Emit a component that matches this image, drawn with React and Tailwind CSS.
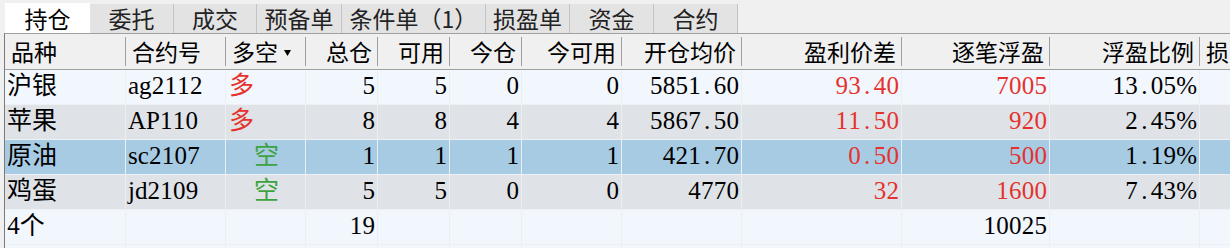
import React from "react";

const CJK = { fontFamily: '"Noto Sans CJK SC", "Noto Sans", sans-serif' };
const DATA = { fontFamily: '"Liberation Serif", "Noto Sans CJK SC", serif' };

const tabs = [
  { t: "持仓", w: "w-[85px]", active: true },
  { t: "委托", w: "w-[84px]" },
  { t: "成交", w: "w-[83px]" },
  { t: "预备单", w: "w-[85px]" },
  { t: "条件单（1）", w: "w-[144px]" },
  { t: "损盈单", w: "w-[84px]" },
  { t: "资金", w: "w-[84px]" },
  { t: "合约", w: "w-[84px]" },
];

const cols = [
  { h: "品种", w: "w-[121px]", left: true },
  { h: "合约号", w: "w-[100px]", left: true },
  { h: "多空", w: "w-[80px]", left: true, tri: true },
  { h: "总仓", w: "w-[72px]" },
  { h: "可用", w: "w-[72px]" },
  { h: "今仓", w: "w-[72px]" },
  { h: "今可用", w: "w-[100px]" },
  { h: "开仓均价", w: "w-[120px]" },
  { h: "盈利价差", w: "w-[160px]" },
  { h: "逐笔浮盈", w: "w-[148px]" },
  { h: "浮盈比例", w: "w-[150px]" },
  { h: "损", w: "w-[60px]", left: true, last: true },
];

const RED = "text-[#e5322d]";
const GREEN = "text-[#3ea33e]";

const rows = [
  { bg: "bg-[#f2f6fd]", c: ["沪银", "ag2112", "多", "5", "5", "0", "0", "5851.60", "93.40", "7005", "13.05%", ""] },
  { bg: "bg-[#dfe3e8]", c: ["苹果", "AP110", "多", "8", "8", "4", "4", "5867.50", "11.50", "920", "2.45%", ""] },
  { bg: "bg-[#a8cbe4]", c: ["原油", "sc2107", "空", "1", "1", "1", "1", "421.70", "0.50", "500", "1.19%", ""] },
  { bg: "bg-[#dfe3e8]", c: ["鸡蛋", "jd2109", "空", "5", "5", "0", "0", "4770", "32", "1600", "7.43%", ""] },
  { bg: "bg-[#f2f6fd]", total: true, c: ["4个", "", "", "19", "", "", "", "", "", "10025", "", ""] },
  { bg: "bg-[#f2f6fd]", c: ["", "", "", "", "", "", "", "", "", "", "", ""] },
];

function Mono({ text }) {
  return (
    <span className="inline-flex items-baseline">
      {Array.from(text).map((ch, i) =>
        "0123456789.".includes(ch) ? (
          <span key={i} className="inline-block w-[12.75px] text-center">
            {ch}
          </span>
        ) : (
          <span key={i}>{ch}</span>
        )
      )}
    </span>
  );
}

function Tri() {
  return (
    <svg width="7" height="6" viewBox="0 0 7 6" className="ml-[6px] mt-[2px]">
      <polygon points="0,0 7,0 3.5,6" fill="#000" />
    </svg>
  );
}

function cellClass(row, i) {
  if (row.total) return "text-black";
  if (i === 2) return row.c[2] === "多" ? RED + " pl-[3px]" : GREEN + " pl-[28px]";
  if (i === 8 || i === 9) return RED;
  return "text-black";
}

export default function App() {
  return (
    <div className="w-[1230px] h-[248px] bg-[#f0f0f0] overflow-hidden">
      {/* tab strip */}
      <div className="flex items-end h-[33px] pl-[5px] whitespace-nowrap" style={CJK}>
        {tabs.map((t) =>
          t.active ? (
            <div
              key={t.t}
              className={`${t.w} h-[30px] bg-white flex items-center justify-center text-[23px] text-black leading-none`}
            >
              {t.t}
            </div>
          ) : (
            <div
              key={t.t}
              className={`${t.w} h-[29px] bg-[#e3e3e3] border-r border-[#c4c4c4] flex items-center justify-center text-[23px] text-[#222] leading-none`}
            >
              {t.t}
            </div>
          )
        )}
      </div>

      {/* table */}
      <div className="ml-[4px] border-l border-l-[#7a7a7a] border-t border-t-[#a0a0a0] whitespace-nowrap">
        {/* header */}
        <div className="flex h-[36px] border-b border-[#a0a0a0] bg-[#f0f0f0]" style={CJK}>
          {cols.map((c) => (
            <div key={c.h} className={`${c.w} shrink-0 flex items-center`}>
              <div
                className={`flex-1 flex items-center text-[23px] leading-none text-black ${
                  c.left ? "justify-start pl-[6px]" : "justify-end pr-[5px]"
                }`}
              >
                {c.h}
                {c.tri && <Tri />}
              </div>
              {!c.last && <div className="w-px h-[29px] bg-[#a0a0a0]" />}
            </div>
          ))}
        </div>

        {/* rows */}
        {rows.map((r, ri) => (
          <div key={ri} className={`flex h-[35px] border-b border-[#eef0f3] ${r.bg}`} style={DATA}>
            {cols.map((c, i) => (
              <div
                key={i}
                className={`${c.w} shrink-0 border-r border-[#eceef1] flex items-center text-[25px] leading-none ${
                  i <= 2 ? "justify-start pl-[2px]" : "justify-end pr-[2px]"
                } ${cellClass(r, i)}`}
              >
                <span className="-mt-[3px]">
                  <Mono text={r.c[i]} />
                </span>
              </div>
            ))}
          </div>
        ))}
      </div>
    </div>
  );
}
